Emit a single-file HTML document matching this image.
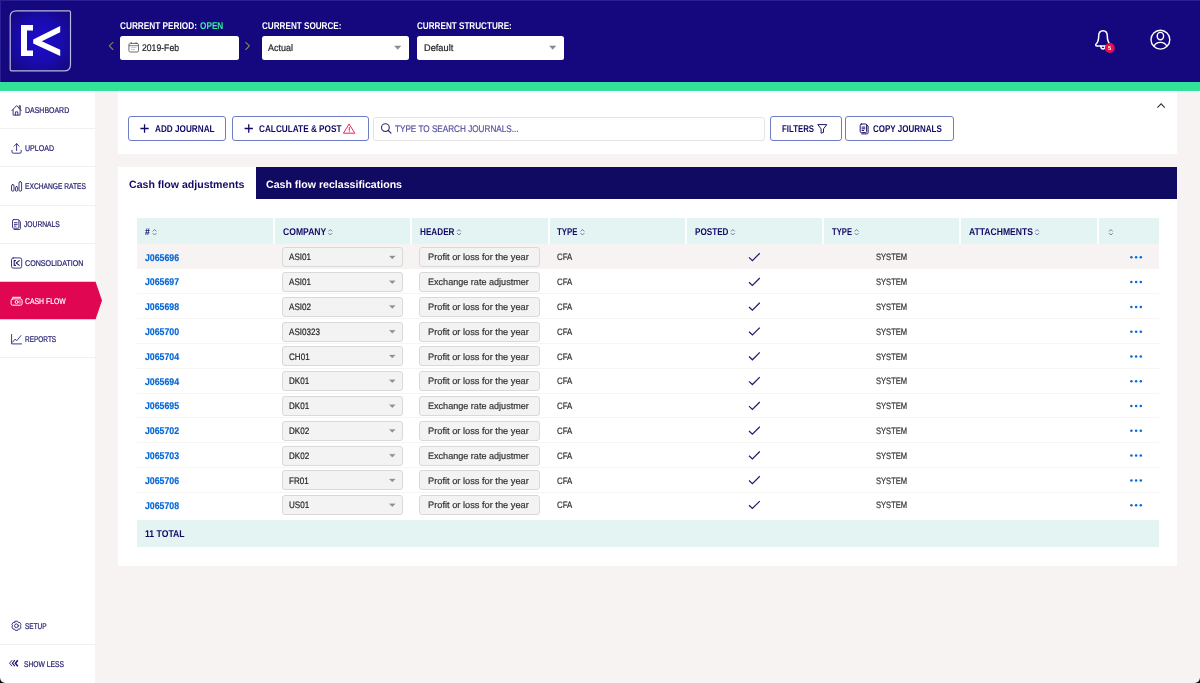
<!DOCTYPE html>
<html lang="en"><head><meta charset="utf-8"><title>Cash flow</title>
<style>
html,body{margin:0;padding:0}
body{width:1200px;height:683px;overflow:hidden;position:relative;background:#f6f3f2;font-family:'Liberation Sans',sans-serif}
.a{position:absolute}
.t{position:absolute;white-space:pre;text-rendering:geometricPrecision;transform-origin:0 50%;font-family:'Liberation Sans',sans-serif}
#top{left:0;top:0;width:1200px;height:82px;background:#15087f}
#green{left:0;top:82px;width:1200px;height:8.7px;background:#34e198}
#side{left:0;top:90.7px;width:95.2px;height:592.3px;background:#fff}
.sep{left:0;width:95.2px;height:1px;background:#f3f0ef}
.field{background:#fff;border-radius:2.5px;height:24px;top:36px}
.panel{background:#fff}
.btn{top:116.3px;height:22.7px;border:1px solid #6f7cc6;border-radius:3px;background:#fff}
#search{left:372.8px;top:116.5px;width:390.4px;height:22.6px;border:1px solid #e4e4e4;border-radius:3px;background:#fff}
.th{top:218.3px;height:26px;background:#e3f4f3}
.rl{left:136.75px;width:1021.85px;height:1px;background:#f7f5f4}
.sel{left:282px;width:119px;height:18px;border:1px solid #d9d9d9;border-radius:3px;background:#f3f3f3}
.inp{left:419.25px;width:119px;height:18px;border:1px solid #d9d9d9;border-radius:3px;background:#f3f3f3}
svg{position:absolute;left:0;top:0;overflow:visible}
.sb{-webkit-text-stroke:0.2px currentColor}
.bd,.asi{-webkit-text-stroke:0.2px currentColor}
.lk{-webkit-text-stroke:0.2px currentColor}

</style></head>
<body>
<div class="a" id="top"></div><div class="a" id="green"></div>
<div class="a" id="side"></div>
<div class="a" style="left:0;top:0;width:1.2px;height:82px;background:#2a1f93"></div><div class="a" style="left:0;top:0;width:1200px;height:0.8px;background:#2a1f93"></div>
<div class="a sep" style="top:128.0px"></div>
<div class="a sep" style="top:166.4px"></div>
<div class="a sep" style="top:204.6px"></div>
<div class="a sep" style="top:243.0px"></div>
<div class="a sep" style="top:357.0px"></div>
<div class="a sep" style="top:644.0px"></div>
<div class="a field" style="left:120px;width:119px"></div>
<div class="a field" style="left:261.5px;width:147px"></div>
<div class="a field" style="left:416.7px;width:147px"></div>
<div class="a panel" style="left:118px;top:90.7px;width:1059.2px;height:63.2px"></div>
<div class="a panel" style="left:118px;top:167.2px;width:1059.2px;height:398.5px"></div>
<div class="a" style="left:255.6px;top:167.2px;width:921.6px;height:32.2px;background:#110a62"></div>
<div class="a btn" style="left:128.3px;width:95.7px"></div>
<div class="a btn" style="left:232.2px;width:134.6px"></div>
<div class="a" id="search"></div>
<div class="a btn" style="left:769.7px;width:70px"></div>
<div class="a btn" style="left:845.3px;width:106.5px"></div>
<div class="a th" style="left:136.75px;width:136.25px"></div>
<div class="a th" style="left:275.00px;width:135.27px"></div>
<div class="a th" style="left:412.27px;width:135.27px"></div>
<div class="a th" style="left:549.54px;width:135.26px"></div>
<div class="a th" style="left:686.80px;width:135.28px"></div>
<div class="a th" style="left:824.08px;width:135.27px"></div>
<div class="a th" style="left:961.35px;width:135.27px"></div>
<div class="a th" style="left:1098.62px;width:59.98px"></div>
<div class="a" style="left:136.75px;top:244.2px;width:1021.85px;height:25.189999999999998px;background:#f6f3f2"></div>
<div class="a rl" style="top:293.43px"></div>
<div class="a rl" style="top:318.22px"></div>
<div class="a rl" style="top:343.01px"></div>
<div class="a rl" style="top:367.80px"></div>
<div class="a rl" style="top:392.59px"></div>
<div class="a rl" style="top:417.38px"></div>
<div class="a rl" style="top:442.17px"></div>
<div class="a rl" style="top:466.96px"></div>
<div class="a rl" style="top:491.75px"></div>
<div class="a sel" style="top:247.30px"></div><div class="a inp" style="top:247.30px"></div>
<div class="a sel" style="top:272.09px"></div><div class="a inp" style="top:272.09px"></div>
<div class="a sel" style="top:296.88px"></div><div class="a inp" style="top:296.88px"></div>
<div class="a sel" style="top:321.67px"></div><div class="a inp" style="top:321.67px"></div>
<div class="a sel" style="top:346.46px"></div><div class="a inp" style="top:346.46px"></div>
<div class="a sel" style="top:371.25px"></div><div class="a inp" style="top:371.25px"></div>
<div class="a sel" style="top:396.04px"></div><div class="a inp" style="top:396.04px"></div>
<div class="a sel" style="top:420.83px"></div><div class="a inp" style="top:420.83px"></div>
<div class="a sel" style="top:445.62px"></div><div class="a inp" style="top:445.62px"></div>
<div class="a sel" style="top:470.41px"></div><div class="a inp" style="top:470.41px"></div>
<div class="a sel" style="top:495.20px"></div><div class="a inp" style="top:495.20px"></div>
<div class="a th" style="left:136.75px;top:520px;width:1021.85px;height:26.75px"></div>
<svg width="1200" height="683" viewBox="0 0 1200 683">
<defs><radialGradient id="lg" cx="50%" cy="50%" r="62%"><stop offset="0" stop-color="#1c0ccf"/><stop offset="0.55" stop-color="#190bb0"/><stop offset="1" stop-color="#150983"/></radialGradient></defs>
<path d="M0,281.8 H95.6 L102,300.5 L95.6,319.2 H0 Z" fill="#e00652"/>
<path d="M16.2,10.9 H69.2 Q70.5,10.9 70.5,12.2 V64.4 Q70.5,70.9 64,70.9 H11.5 Q10.2,70.9 10.2,69.6 V16.9 Q10.2,10.9 16.2,10.9 Z" fill="url(#lg)" stroke="#b8b6e2" stroke-width="1.2"/>
<path d="M21,25 H33 V30.4 H27 V50.6 H33 V56 H21 Z" fill="#fff"/>
<path d="M60.2,26 V32.2 L41.8,41.3 L60.2,49.8 V56 L33.2,43.6 V39.4 Z" fill="#fff"/>
<g fill="none" stroke="#5a5a5a" stroke-width="0.9"><rect x="128.9" y="43.4" width="9.6" height="8.6" rx="1.5"/><path d="M128.9,45.7 H138.5" stroke-width="0.8"/><path d="M131.3,42.5 V43.8 M136.1,42.5 V43.8" stroke-width="1.3" stroke="#444"/><path d="M131,47.6 H136.6 M131,49.6 H135" stroke="#c4c4c4" stroke-width="1"/></g>
<g fill="none" stroke="#8b8352" stroke-width="1.1" stroke-linecap="round" stroke-linejoin="round"><path d="M112.9,42.3 L109.3,45.9 L112.9,49.5"/><path d="M245.8,42.3 L249.4,45.9 L245.8,49.5"/></g>
<path d="M394.7,46 H400.7 L397.7,49.3 Z" fill="#8a8a8a" stroke="#8a8a8a" stroke-width="0.6" stroke-linejoin="round"/>
<path d="M549.7,46 H555.7 L552.7,49.3 Z" fill="#8a8a8a" stroke="#8a8a8a" stroke-width="0.6" stroke-linejoin="round"/>
<g fill="none" stroke="#fff" stroke-width="1.5" stroke-linejoin="round" stroke-linecap="round"><path d="M1103,30.7 C1100,30.7 1098.7,33.2 1098.7,36 C1098.7,40 1098,42.2 1096.1,44 C1095.3,44.8 1095.7,46.1 1096.9,46.1 H1109.1 C1110.3,46.1 1110.7,44.8 1109.9,44 C1108,42.2 1107.3,40 1107.3,36 C1107.3,33.2 1106,30.7 1103,30.7 Z"/><path d="M1100.9,46.3 C1100.9,48 1101.8,49 1103,49 C1104.2,49 1105.1,48 1105.1,46.3"/></g>
<circle cx="1109.8" cy="48" r="5" fill="#ea0f50"/>
<g fill="none" stroke="#fff" stroke-width="1.4"><circle cx="1160.4" cy="39.7" r="9.4"/><ellipse cx="1160.4" cy="36.1" rx="3.2" ry="3.7"/><path d="M1153.9,46.4 C1155.2,43.5 1157.6,42.4 1160.4,42.4 C1163.2,42.4 1165.6,43.5 1166.9,46.4"/></g>
<g fill="none" stroke="#2a2674" stroke-width="0.9" stroke-linejoin="round" stroke-linecap="round">
<path d="M11.9,110.6 L16.6,105.6 L21.3,110.6 M13.1,109.6 V115.1 H20.1 V109.6 M15.4,115.1 V111.9 H17.8 V115.1 M19.2,108 V105.7 H20.3 V109.2"/>
<path d="M16.6,150.6 V143.7 M14.1,146.2 L16.6,143.7 L19.1,146.2 M12,150.3 V152 Q12,153.2 13.2,153.2 H20 Q21.2,153.2 21.2,152 V150.3"/>
<rect x="11.5" y="184.6" width="2.5" height="6.6" rx="1.2"/><rect x="15.4" y="186.6" width="2.3" height="4.6" rx="1.1"/><rect x="19" y="181.7" width="2.6" height="9.5" rx="1.2"/>
<path d="M13.6,219.6 H17.9 Q18.9,219.6 18.9,220.6 V227.2 Q18.9,228.2 17.9,228.2 H13.6 Q12.5,228.2 12.5,227 V220.8 Q12.5,219.6 13.6,219.6 Z M14,229.5 H19.3 Q20.4,229.5 20.4,228.3 V221.6 L18.9,220.2 M14.3,222.7 H17.2 M14.3,224.4 H17.2 M14.3,226.1 H16"/>
<rect x="11.5" y="257.9" width="10.2" height="10.2" rx="1.8"/><path d="M15.6,260.6 H14.2 V265.4 H15.6 M19.3,260.6 L16.2,263 L19.3,265.4" stroke-width="1.1"/>
<path d="M11.6,334.5 V343.9 H21.6 M12.6,342.2 L15,339.2 L16.8,340.6 L21,335.6"/>
<path d="M15.23,621.21 L17.67,621.21 L18.32,622.55 L19.81,622.45 L21.04,624.56 L20.20,625.80 L21.04,627.04 L19.81,629.15 L18.32,629.05 L17.67,630.39 L15.23,630.39 L14.57,629.05 L13.09,629.15 L11.86,627.04 L12.70,625.80 L11.86,624.56 L13.09,622.45 L14.57,622.55 Z"/><circle cx="16.45" cy="625.8" r="1.9"/>
</g>
<g fill="none" stroke="#1c1769" stroke-width="1.3" stroke-linejoin="miter"><path d="M12,660.2 L9.6,663.2 L12,666.2" stroke-width="0.9"/><path d="M14.8,660.2 L12.4,663.2 L14.8,666.2" stroke-width="1.1"/><path d="M17.8,660.2 L15.4,663.2 L17.8,666.2" stroke-width="1.5"/></g>
<g fill="none" stroke="#fff" stroke-width="1" stroke-linejoin="round" stroke-linecap="round"><rect x="11.1" y="298.9" width="11" height="6.3" rx="1.5"/><circle cx="16.6" cy="302" r="1.5"/><path d="M12.6,297.3 H20.6"/><path d="M20,300.6 V303.4" stroke-width="0.8"/></g>
<g fill="none" stroke="#120a66" stroke-width="1.3"><path d="M140.4,128.5 H148.7 M144.55,124.35 V132.65 M244.6,128.5 H252.9 M248.75,124.35 V132.65"/></g>
<g fill="none" stroke="#e8265e" stroke-width="1" stroke-linejoin="round" stroke-linecap="round"><path d="M349.3,124.3 L354.8,133.2 H343.8 Z"/><path d="M349.3,127.4 V130.3 M349.3,131.7 V131.8"/></g>
<g fill="none" stroke="#2f2b7c" stroke-width="1.15" stroke-linecap="round"><circle cx="385.4" cy="127.6" r="3.9"/><path d="M388.3,130.5 L391,133.2"/></g>
<path d="M817.8,124.6 H826.8 L823.5,128.9 V132.4 L821.1,133.2 V128.9 Z" fill="none" stroke="#1c1769" stroke-width="1" stroke-linejoin="round"/>
<g transform="translate(847.7,-95.6)" fill="none" stroke="#1c1769" stroke-width="1" stroke-linejoin="round" stroke-linecap="round"><path d="M13.6,219.6 H17.9 Q18.9,219.6 18.9,220.6 V227.2 Q18.9,228.2 17.9,228.2 H13.6 Q12.5,228.2 12.5,227 V220.8 Q12.5,219.6 13.6,219.6 Z M14,229.5 H19.3 Q20.4,229.5 20.4,228.3 V221.6 L18.9,220.2 M14.3,222.7 H17.2 M14.3,224.4 H17.2 M14.3,226.1 H16"/></g>
<path d="M1157.4,107.7 L1161.1,103.9 L1164.8,107.7" fill="none" stroke="#333" stroke-width="1.1"/>
<g fill="none" stroke="#6f719f" stroke-width="0.95" stroke-linecap="round" stroke-linejoin="round">
<path d="M153.0,231.1 L154.6,229.5 L156.20000000000002,231.1 M153.0,233.4 L154.6,235 L156.20000000000002,233.4"/>
<path d="M328.70000000000005,231.1 L330.3,229.5 L331.90000000000003,231.1 M328.70000000000005,233.4 L330.3,235 L331.90000000000003,233.4"/>
<path d="M457.35,231.1 L458.95,229.5 L460.55,231.1 M457.35,233.4 L458.95,235 L460.55,233.4"/>
<path d="M580.85,231.1 L582.45,229.5 L584.05,231.1 M580.85,233.4 L582.45,235 L584.05,233.4"/>
<path d="M731.2,231.1 L732.8000000000001,229.5 L734.4,231.1 M731.2,233.4 L732.8000000000001,235 L734.4,233.4"/>
<path d="M855.0,231.1 L856.6,229.5 L858.1999999999999,231.1 M855.0,233.4 L856.6,235 L858.1999999999999,233.4"/>
<path d="M1035.6,231.1 L1037.2,229.5 L1038.8,231.1 M1035.6,233.4 L1037.2,235 L1038.8,233.4"/>
<path d="M1109.25,231.1 L1110.8500000000001,229.5 L1112.45,231.1 M1109.25,233.4 L1110.8500000000001,235 L1112.45,233.4"/>
</g>
<path d="M749,257.40 L752.4,260.60 L759.8,253.20" fill="none" stroke="#231c6e" stroke-width="1.25"/>
<circle cx="1131.4" cy="257.30" r="1.25" fill="#0868d8"/>
<circle cx="1136.1" cy="257.30" r="1.25" fill="#0868d8"/>
<circle cx="1140.8" cy="257.30" r="1.25" fill="#0868d8"/>
<path d="M389.4,255.90 H395.2 L392.3,258.90 Z" fill="#8f8f8f" stroke="#8f8f8f" stroke-width="0.3" stroke-linejoin="round"/>
<path d="M749,282.19 L752.4,285.39 L759.8,277.99" fill="none" stroke="#231c6e" stroke-width="1.25"/>
<circle cx="1131.4" cy="282.09" r="1.25" fill="#0868d8"/>
<circle cx="1136.1" cy="282.09" r="1.25" fill="#0868d8"/>
<circle cx="1140.8" cy="282.09" r="1.25" fill="#0868d8"/>
<path d="M389.4,280.69 H395.2 L392.3,283.69 Z" fill="#8f8f8f" stroke="#8f8f8f" stroke-width="0.3" stroke-linejoin="round"/>
<path d="M749,306.98 L752.4,310.18 L759.8,302.78" fill="none" stroke="#231c6e" stroke-width="1.25"/>
<circle cx="1131.4" cy="306.88" r="1.25" fill="#0868d8"/>
<circle cx="1136.1" cy="306.88" r="1.25" fill="#0868d8"/>
<circle cx="1140.8" cy="306.88" r="1.25" fill="#0868d8"/>
<path d="M389.4,305.48 H395.2 L392.3,308.48 Z" fill="#8f8f8f" stroke="#8f8f8f" stroke-width="0.3" stroke-linejoin="round"/>
<path d="M749,331.77 L752.4,334.97 L759.8,327.57" fill="none" stroke="#231c6e" stroke-width="1.25"/>
<circle cx="1131.4" cy="331.67" r="1.25" fill="#0868d8"/>
<circle cx="1136.1" cy="331.67" r="1.25" fill="#0868d8"/>
<circle cx="1140.8" cy="331.67" r="1.25" fill="#0868d8"/>
<path d="M389.4,330.27 H395.2 L392.3,333.27 Z" fill="#8f8f8f" stroke="#8f8f8f" stroke-width="0.3" stroke-linejoin="round"/>
<path d="M749,356.56 L752.4,359.76 L759.8,352.36" fill="none" stroke="#231c6e" stroke-width="1.25"/>
<circle cx="1131.4" cy="356.46" r="1.25" fill="#0868d8"/>
<circle cx="1136.1" cy="356.46" r="1.25" fill="#0868d8"/>
<circle cx="1140.8" cy="356.46" r="1.25" fill="#0868d8"/>
<path d="M389.4,355.06 H395.2 L392.3,358.06 Z" fill="#8f8f8f" stroke="#8f8f8f" stroke-width="0.3" stroke-linejoin="round"/>
<path d="M749,381.35 L752.4,384.55 L759.8,377.15" fill="none" stroke="#231c6e" stroke-width="1.25"/>
<circle cx="1131.4" cy="381.25" r="1.25" fill="#0868d8"/>
<circle cx="1136.1" cy="381.25" r="1.25" fill="#0868d8"/>
<circle cx="1140.8" cy="381.25" r="1.25" fill="#0868d8"/>
<path d="M389.4,379.85 H395.2 L392.3,382.85 Z" fill="#8f8f8f" stroke="#8f8f8f" stroke-width="0.3" stroke-linejoin="round"/>
<path d="M749,406.14 L752.4,409.34 L759.8,401.94" fill="none" stroke="#231c6e" stroke-width="1.25"/>
<circle cx="1131.4" cy="406.04" r="1.25" fill="#0868d8"/>
<circle cx="1136.1" cy="406.04" r="1.25" fill="#0868d8"/>
<circle cx="1140.8" cy="406.04" r="1.25" fill="#0868d8"/>
<path d="M389.4,404.64 H395.2 L392.3,407.64 Z" fill="#8f8f8f" stroke="#8f8f8f" stroke-width="0.3" stroke-linejoin="round"/>
<path d="M749,430.93 L752.4,434.13 L759.8,426.73" fill="none" stroke="#231c6e" stroke-width="1.25"/>
<circle cx="1131.4" cy="430.83" r="1.25" fill="#0868d8"/>
<circle cx="1136.1" cy="430.83" r="1.25" fill="#0868d8"/>
<circle cx="1140.8" cy="430.83" r="1.25" fill="#0868d8"/>
<path d="M389.4,429.43 H395.2 L392.3,432.43 Z" fill="#8f8f8f" stroke="#8f8f8f" stroke-width="0.3" stroke-linejoin="round"/>
<path d="M749,455.72 L752.4,458.92 L759.8,451.52" fill="none" stroke="#231c6e" stroke-width="1.25"/>
<circle cx="1131.4" cy="455.62" r="1.25" fill="#0868d8"/>
<circle cx="1136.1" cy="455.62" r="1.25" fill="#0868d8"/>
<circle cx="1140.8" cy="455.62" r="1.25" fill="#0868d8"/>
<path d="M389.4,454.22 H395.2 L392.3,457.22 Z" fill="#8f8f8f" stroke="#8f8f8f" stroke-width="0.3" stroke-linejoin="round"/>
<path d="M749,480.51 L752.4,483.71 L759.8,476.31" fill="none" stroke="#231c6e" stroke-width="1.25"/>
<circle cx="1131.4" cy="480.41" r="1.25" fill="#0868d8"/>
<circle cx="1136.1" cy="480.41" r="1.25" fill="#0868d8"/>
<circle cx="1140.8" cy="480.41" r="1.25" fill="#0868d8"/>
<path d="M389.4,479.01 H395.2 L392.3,482.01 Z" fill="#8f8f8f" stroke="#8f8f8f" stroke-width="0.3" stroke-linejoin="round"/>
<path d="M749,505.30 L752.4,508.50 L759.8,501.10" fill="none" stroke="#231c6e" stroke-width="1.25"/>
<circle cx="1131.4" cy="505.20" r="1.25" fill="#0868d8"/>
<circle cx="1136.1" cy="505.20" r="1.25" fill="#0868d8"/>
<circle cx="1140.8" cy="505.20" r="1.25" fill="#0868d8"/>
<path d="M389.4,503.80 H395.2 L392.3,506.80 Z" fill="#8f8f8f" stroke="#8f8f8f" stroke-width="0.3" stroke-linejoin="round"/>
<path d="M0,683 V677.5 Q0.3,682.7 5.5,683 Z" fill="#000"/><path d="M1200,683 V677.5 Q1199.7,682.7 1194.5,683 Z" fill="#000"/>
</svg>
<div id="texts" style="position:absolute;left:0;top:0;width:1200px;height:683px;will-change:transform">
<span class="t" style="left:120.00px;top:20.45px;font-size:9.8px;line-height:13.7px;font-weight:700;color:#ffffff;transform:scaleX(0.8420)">CURRENT PERIOD:</span>
<span class="t" style="left:200.00px;top:20.45px;font-size:9.8px;line-height:13.7px;font-weight:700;color:#3aec9e;transform:scaleX(0.8392)">OPEN</span>
<span class="t" style="left:261.50px;top:20.45px;font-size:9.8px;line-height:13.7px;font-weight:700;color:#ffffff;transform:scaleX(0.8299)">CURRENT SOURCE:</span>
<span class="t" style="left:416.70px;top:20.45px;font-size:9.8px;line-height:13.7px;font-weight:700;color:#ffffff;transform:scaleX(0.8294)">CURRENT STRUCTURE:</span>
<span class="t bd" style="left:142.00px;top:42.00px;font-size:9.6px;line-height:13.4px;font-weight:400;color:#222222;transform:scaleX(0.9007)">2019-Feb</span>
<span class="t bd" style="left:268.40px;top:42.00px;font-size:9.6px;line-height:13.4px;font-weight:400;color:#222222;transform:scaleX(0.9336)">Actual</span>
<span class="t bd" style="left:423.75px;top:42.00px;font-size:9.6px;line-height:13.4px;font-weight:400;color:#222222;transform:scaleX(0.9620)">Default</span>
<span class="t" style="left:1108.20px;top:44.90px;font-size:6px;line-height:8.4px;font-weight:700;color:#ffffff;transform:scaleX(0.9570)">5</span>
<span class="t sb" style="left:25.00px;top:105.30px;font-size:8.4px;line-height:11.8px;font-weight:400;color:#1c1769;transform:scaleX(0.8330)">DASHBOARD</span>
<span class="t sb" style="left:25.00px;top:142.50px;font-size:8.4px;line-height:11.8px;font-weight:400;color:#1c1769;transform:scaleX(0.8417)">UPLOAD</span>
<span class="t sb" style="left:25.00px;top:180.60px;font-size:8.4px;line-height:11.8px;font-weight:400;color:#1c1769;transform:scaleX(0.7959)">EXCHANGE RATES</span>
<span class="t sb" style="left:24.40px;top:218.70px;font-size:8.4px;line-height:11.8px;font-weight:400;color:#1c1769;transform:scaleX(0.8011)">JOURNALS</span>
<span class="t sb" style="left:25.00px;top:257.90px;font-size:8.4px;line-height:11.8px;font-weight:400;color:#1c1769;transform:scaleX(0.8513)">CONSOLIDATION</span>
<span class="t sb" style="left:25.00px;top:296.00px;font-size:8.4px;line-height:11.8px;font-weight:400;color:#ffffff;transform:scaleX(0.8193)">CASH FLOW</span>
<span class="t sb" style="left:25.00px;top:334.20px;font-size:8.4px;line-height:11.8px;font-weight:400;color:#1c1769;transform:scaleX(0.7734)">REPORTS</span>
<span class="t sb" style="left:25.00px;top:621.00px;font-size:8.4px;line-height:11.8px;font-weight:400;color:#1c1769;transform:scaleX(0.7732)">SETUP</span>
<span class="t sb" style="left:24.00px;top:659.10px;font-size:8.4px;line-height:11.8px;font-weight:400;color:#1c1769;transform:scaleX(0.8033)">SHOW LESS</span>
<span class="t" style="left:154.50px;top:122.65px;font-size:9.8px;line-height:13.7px;font-weight:700;color:#120a66;transform:scaleX(0.8358)">ADD JOURNAL</span>
<span class="t" style="left:258.50px;top:122.65px;font-size:9.8px;line-height:13.7px;font-weight:700;color:#120a66;transform:scaleX(0.8390)">CALCULATE &amp; POST</span>
<span class="t sb" style="left:395.40px;top:122.80px;font-size:9.6px;line-height:13.4px;font-weight:400;color:#55529f;transform:scaleX(0.8506)">TYPE TO SEARCH JOURNALS...</span>
<span class="t" style="left:781.60px;top:122.65px;font-size:9.8px;line-height:13.7px;font-weight:700;color:#120a66;transform:scaleX(0.7981)">FILTERS</span>
<span class="t" style="left:873.20px;top:122.65px;font-size:9.8px;line-height:13.7px;font-weight:700;color:#120a66;transform:scaleX(0.8171)">COPY JOURNALS</span>
<span class="t" style="left:128.70px;top:177.70px;font-size:10.6px;line-height:14.8px;font-weight:700;color:#120a66;transform:scaleX(0.9993)">Cash flow adjustments</span>
<span class="t" style="left:266.00px;top:177.70px;font-size:10.6px;line-height:14.8px;font-weight:700;color:#ffffff;transform:scaleX(0.9999)">Cash flow reclassifications</span>
<span class="t" style="left:144.50px;top:225.95px;font-size:9.8px;line-height:13.7px;font-weight:700;color:#120a66;transform:scaleX(0.8802)">#</span>
<span class="t" style="left:282.80px;top:225.95px;font-size:9.8px;line-height:13.7px;font-weight:700;color:#120a66;transform:scaleX(0.8772)">COMPANY</span>
<span class="t" style="left:420.00px;top:225.95px;font-size:9.8px;line-height:13.7px;font-weight:700;color:#120a66;transform:scaleX(0.8338)">HEADER</span>
<span class="t" style="left:557.00px;top:225.95px;font-size:9.8px;line-height:13.7px;font-weight:700;color:#120a66;transform:scaleX(0.8010)">TYPE</span>
<span class="t" style="left:694.50px;top:225.95px;font-size:9.8px;line-height:13.7px;font-weight:700;color:#120a66;transform:scaleX(0.8313)">POSTED</span>
<span class="t" style="left:832.00px;top:225.95px;font-size:9.8px;line-height:13.7px;font-weight:700;color:#120a66;transform:scaleX(0.7814)">TYPE</span>
<span class="t" style="left:968.80px;top:225.95px;font-size:9.8px;line-height:13.7px;font-weight:700;color:#120a66;transform:scaleX(0.8740)">ATTACHMENTS</span>
<span class="t lk" style="left:144.80px;top:252.45px;font-size:9.8px;line-height:13.7px;font-weight:700;color:#0868d8;transform:scaleX(0.8941)">J065696</span>
<span class="t asi" style="left:289.25px;top:249.50px;font-size:9.4px;line-height:13.2px;font-weight:400;color:#262626;transform:scaleX(0.8612)">ASI01</span>
<span class="t bd" style="left:428.00px;top:250.60px;font-size:9.3px;line-height:13.0px;font-weight:400;color:#333333;transform:scaleX(0.9952)">Profit or loss for the year</span>
<span class="t bd" style="left:556.70px;top:250.60px;font-size:9.3px;line-height:13.0px;font-weight:400;color:#333333;transform:scaleX(0.8401)">CFA</span>
<span class="t bd" style="left:876.00px;top:250.60px;font-size:9.3px;line-height:13.0px;font-weight:400;color:#333333;transform:scaleX(0.8160)">SYSTEM</span>
<span class="t lk" style="left:144.80px;top:276.24px;font-size:9.8px;line-height:13.7px;font-weight:700;color:#0868d8;transform:scaleX(0.8941)">J065697</span>
<span class="t asi" style="left:289.25px;top:275.29px;font-size:9.4px;line-height:13.2px;font-weight:400;color:#262626;transform:scaleX(0.8612)">ASI01</span>
<span class="t bd" style="left:428.00px;top:276.39px;font-size:9.3px;line-height:13.0px;font-weight:400;color:#333333;transform:scaleX(0.9752)">Exchange rate adjustmer</span>
<span class="t bd" style="left:556.70px;top:276.39px;font-size:9.3px;line-height:13.0px;font-weight:400;color:#333333;transform:scaleX(0.8401)">CFA</span>
<span class="t bd" style="left:876.00px;top:276.39px;font-size:9.3px;line-height:13.0px;font-weight:400;color:#333333;transform:scaleX(0.8160)">SYSTEM</span>
<span class="t lk" style="left:144.80px;top:301.03px;font-size:9.8px;line-height:13.7px;font-weight:700;color:#0868d8;transform:scaleX(0.8941)">J065698</span>
<span class="t asi" style="left:289.25px;top:300.08px;font-size:9.4px;line-height:13.2px;font-weight:400;color:#262626;transform:scaleX(0.8612)">ASI02</span>
<span class="t bd" style="left:428.00px;top:301.18px;font-size:9.3px;line-height:13.0px;font-weight:400;color:#333333;transform:scaleX(0.9952)">Profit or loss for the year</span>
<span class="t bd" style="left:556.70px;top:301.18px;font-size:9.3px;line-height:13.0px;font-weight:400;color:#333333;transform:scaleX(0.8401)">CFA</span>
<span class="t bd" style="left:876.00px;top:301.18px;font-size:9.3px;line-height:13.0px;font-weight:400;color:#333333;transform:scaleX(0.8160)">SYSTEM</span>
<span class="t lk" style="left:144.80px;top:325.82px;font-size:9.8px;line-height:13.7px;font-weight:700;color:#0868d8;transform:scaleX(0.8941)">J065700</span>
<span class="t asi" style="left:289.25px;top:324.87px;font-size:9.4px;line-height:13.2px;font-weight:400;color:#262626;transform:scaleX(0.8612)">ASI0323</span>
<span class="t bd" style="left:428.00px;top:325.97px;font-size:9.3px;line-height:13.0px;font-weight:400;color:#333333;transform:scaleX(0.9952)">Profit or loss for the year</span>
<span class="t bd" style="left:556.70px;top:325.97px;font-size:9.3px;line-height:13.0px;font-weight:400;color:#333333;transform:scaleX(0.8401)">CFA</span>
<span class="t bd" style="left:876.00px;top:325.97px;font-size:9.3px;line-height:13.0px;font-weight:400;color:#333333;transform:scaleX(0.8160)">SYSTEM</span>
<span class="t lk" style="left:144.80px;top:350.61px;font-size:9.8px;line-height:13.7px;font-weight:700;color:#0868d8;transform:scaleX(0.8941)">J065704</span>
<span class="t asi" style="left:289.25px;top:349.66px;font-size:9.4px;line-height:13.2px;font-weight:400;color:#262626;transform:scaleX(0.8612)">CH01</span>
<span class="t bd" style="left:428.00px;top:350.76px;font-size:9.3px;line-height:13.0px;font-weight:400;color:#333333;transform:scaleX(0.9952)">Profit or loss for the year</span>
<span class="t bd" style="left:556.70px;top:350.76px;font-size:9.3px;line-height:13.0px;font-weight:400;color:#333333;transform:scaleX(0.8401)">CFA</span>
<span class="t bd" style="left:876.00px;top:350.76px;font-size:9.3px;line-height:13.0px;font-weight:400;color:#333333;transform:scaleX(0.8160)">SYSTEM</span>
<span class="t lk" style="left:144.80px;top:376.40px;font-size:9.8px;line-height:13.7px;font-weight:700;color:#0868d8;transform:scaleX(0.8941)">J065694</span>
<span class="t asi" style="left:289.25px;top:374.45px;font-size:9.4px;line-height:13.2px;font-weight:400;color:#262626;transform:scaleX(0.8612)">DK01</span>
<span class="t bd" style="left:428.00px;top:374.55px;font-size:9.3px;line-height:13.0px;font-weight:400;color:#333333;transform:scaleX(0.9952)">Profit or loss for the year</span>
<span class="t bd" style="left:556.70px;top:374.55px;font-size:9.3px;line-height:13.0px;font-weight:400;color:#333333;transform:scaleX(0.8401)">CFA</span>
<span class="t bd" style="left:876.00px;top:374.55px;font-size:9.3px;line-height:13.0px;font-weight:400;color:#333333;transform:scaleX(0.8160)">SYSTEM</span>
<span class="t lk" style="left:144.80px;top:400.19px;font-size:9.8px;line-height:13.7px;font-weight:700;color:#0868d8;transform:scaleX(0.8941)">J065695</span>
<span class="t asi" style="left:289.25px;top:399.24px;font-size:9.4px;line-height:13.2px;font-weight:400;color:#262626;transform:scaleX(0.8612)">DK01</span>
<span class="t bd" style="left:428.00px;top:400.34px;font-size:9.3px;line-height:13.0px;font-weight:400;color:#333333;transform:scaleX(0.9752)">Exchange rate adjustmer</span>
<span class="t bd" style="left:556.70px;top:400.34px;font-size:9.3px;line-height:13.0px;font-weight:400;color:#333333;transform:scaleX(0.8401)">CFA</span>
<span class="t bd" style="left:876.00px;top:400.34px;font-size:9.3px;line-height:13.0px;font-weight:400;color:#333333;transform:scaleX(0.8160)">SYSTEM</span>
<span class="t lk" style="left:144.80px;top:424.98px;font-size:9.8px;line-height:13.7px;font-weight:700;color:#0868d8;transform:scaleX(0.8941)">J065702</span>
<span class="t asi" style="left:289.25px;top:424.03px;font-size:9.4px;line-height:13.2px;font-weight:400;color:#262626;transform:scaleX(0.8612)">DK02</span>
<span class="t bd" style="left:428.00px;top:425.13px;font-size:9.3px;line-height:13.0px;font-weight:400;color:#333333;transform:scaleX(0.9952)">Profit or loss for the year</span>
<span class="t bd" style="left:556.70px;top:425.13px;font-size:9.3px;line-height:13.0px;font-weight:400;color:#333333;transform:scaleX(0.8401)">CFA</span>
<span class="t bd" style="left:876.00px;top:425.13px;font-size:9.3px;line-height:13.0px;font-weight:400;color:#333333;transform:scaleX(0.8160)">SYSTEM</span>
<span class="t lk" style="left:144.80px;top:449.77px;font-size:9.8px;line-height:13.7px;font-weight:700;color:#0868d8;transform:scaleX(0.8941)">J065703</span>
<span class="t asi" style="left:289.25px;top:448.82px;font-size:9.4px;line-height:13.2px;font-weight:400;color:#262626;transform:scaleX(0.8612)">DK02</span>
<span class="t bd" style="left:428.00px;top:449.92px;font-size:9.3px;line-height:13.0px;font-weight:400;color:#333333;transform:scaleX(0.9752)">Exchange rate adjustmer</span>
<span class="t bd" style="left:556.70px;top:449.92px;font-size:9.3px;line-height:13.0px;font-weight:400;color:#333333;transform:scaleX(0.8401)">CFA</span>
<span class="t bd" style="left:876.00px;top:449.92px;font-size:9.3px;line-height:13.0px;font-weight:400;color:#333333;transform:scaleX(0.8160)">SYSTEM</span>
<span class="t lk" style="left:144.80px;top:474.56px;font-size:9.8px;line-height:13.7px;font-weight:700;color:#0868d8;transform:scaleX(0.8941)">J065706</span>
<span class="t asi" style="left:289.25px;top:473.61px;font-size:9.4px;line-height:13.2px;font-weight:400;color:#262626;transform:scaleX(0.8612)">FR01</span>
<span class="t bd" style="left:428.00px;top:474.71px;font-size:9.3px;line-height:13.0px;font-weight:400;color:#333333;transform:scaleX(0.9952)">Profit or loss for the year</span>
<span class="t bd" style="left:556.70px;top:474.71px;font-size:9.3px;line-height:13.0px;font-weight:400;color:#333333;transform:scaleX(0.8401)">CFA</span>
<span class="t bd" style="left:876.00px;top:474.71px;font-size:9.3px;line-height:13.0px;font-weight:400;color:#333333;transform:scaleX(0.8160)">SYSTEM</span>
<span class="t lk" style="left:144.80px;top:500.35px;font-size:9.8px;line-height:13.7px;font-weight:700;color:#0868d8;transform:scaleX(0.8941)">J065708</span>
<span class="t asi" style="left:289.25px;top:498.40px;font-size:9.4px;line-height:13.2px;font-weight:400;color:#262626;transform:scaleX(0.8612)">US01</span>
<span class="t bd" style="left:428.00px;top:498.50px;font-size:9.3px;line-height:13.0px;font-weight:400;color:#333333;transform:scaleX(0.9952)">Profit or loss for the year</span>
<span class="t bd" style="left:556.70px;top:498.50px;font-size:9.3px;line-height:13.0px;font-weight:400;color:#333333;transform:scaleX(0.8401)">CFA</span>
<span class="t bd" style="left:876.00px;top:498.50px;font-size:9.3px;line-height:13.0px;font-weight:400;color:#333333;transform:scaleX(0.8160)">SYSTEM</span>
<span class="t" style="left:144.80px;top:527.75px;font-size:9.8px;line-height:13.7px;font-weight:700;color:#120a66;transform:scaleX(0.8834)">11 TOTAL</span>
</div>
</body></html>
